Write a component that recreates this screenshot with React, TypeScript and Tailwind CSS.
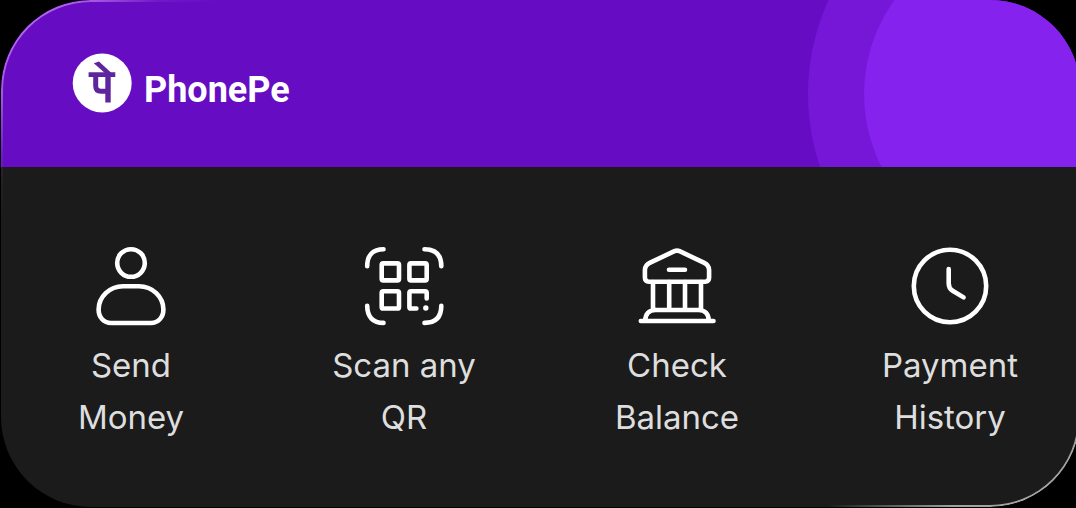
import type { ReactNode } from "react";

function Glyph({ children }: { children: ReactNode }) {
  return (
    <svg
      aria-hidden="true"
      className="size-20"
      viewBox="0 0 80 80"
      fill="none"
      stroke="white"
      strokeWidth="4.6"
      strokeLinecap="round"
      strokeLinejoin="round"
    >
      {children}
    </svg>
  );
}

const actions = [
  {
    lines: ["Send", "Money"],
    icon: (
      <Glyph>
        <circle cx="40" cy="17" r="13.8" />
        <path d="M32 40.3H48C61.5 40.3 72.4 51 72.4 63.5C72.4 71.5 67 77 60 77H20C13 77 7.6 71.5 7.6 63.5C7.6 51 18.5 40.3 32 40.3Z" />
      </Glyph>
    ),
  },
  {
    lines: ["Scan any", "QR"],
    icon: (
      <Glyph>
        <path d="M19.5 3.2C9 3.2 3.2 9 3.2 20.2M60.5 3.2C71.5 3.2 77.3 9 77.3 20.2M77.3 59.8C77.3 71 71.5 76.9 60.5 76.9M19.5 76.9C9 76.9 3.2 71 3.2 59.8" />
        <rect x="17.7" y="17.4" width="17.3" height="17" rx="1.6" />
        <rect x="45.4" y="17.4" width="17.3" height="17" rx="1.6" />
        <rect x="17.7" y="45.2" width="17.3" height="17.3" rx="1.6" />
        <path d="M52.4 62.5H47C46 62.5 45.4 61.9 45.4 60.9V46.8C45.4 45.8 46 45.2 47 45.2H61.1C62.1 45.2 62.7 45.8 62.7 46.8V52.4" />
        <circle cx="61.8" cy="62" r="2.7" fill="white" stroke="none" />
      </Glyph>
    ),
  },
  {
    lines: ["Check", "Balance"],
    icon: (
      <Glyph>
        <path d="M37.4 5.2C39.2 4.4 40.8 4.4 42.6 5.2L66.8 16.6C70 18.1 72.1 20.6 72.1 24V31.5C72.1 34.3 70.7 35.7 68 35.7H12C9.3 35.7 7.9 34.3 7.9 31.5V24C7.9 20.6 10 18.1 13.2 16.6Z" />
        <path d="M32 23.8H48M16 36V64M32.2 36V64M48 36V64M64 36V64M3.8 75H76.5M8.2 75C8.2 68 12 64 18.5 64H61.5C68 64 71.8 68 71.8 75" />
      </Glyph>
    ),
  },
  {
    lines: ["Payment", "History"],
    icon: (
      <Glyph>
        <circle cx="40" cy="40" r="36.2" />
        <path d="M38.7 23V37.5C38.7 41 39.8 43 42.6 44.7L53.6 51.4" />
      </Glyph>
    ),
  },
];

function Logo() {
  return (
    <div className="flex items-end gap-3">
      <svg aria-hidden="true" className="size-15" viewBox="0 0 60 60">
        <circle cx="30.2" cy="30" r="29.5" fill="white" />
        <g fill="none" stroke="#5f259f">
          <path d="M16.6 21.6H43.3" strokeWidth="4.6" />
          <path d="M36 21V49.5" strokeWidth="5.4" />
          <path d="M23.7 22V33C23.7 36.8 25.5 38.2 29 38.2H36" strokeWidth="5" />
        </g>
        <path d="M21.8 10.2L27 8.4L40 20.5H33.4Z" fill="#5f259f" />
      </svg>
      <span className="font-['Roboto',sans-serif] text-[36px] leading-[46px] font-bold text-white">
        PhonePe
      </span>
    </div>
  );
}

export default function App() {
  return (
    <div className="min-h-screen overflow-hidden bg-black font-['Inter',sans-serif]">
      <main className="relative -mr-1 ml-px overflow-hidden rounded-[90px] bg-[#1b1b1b]">
        <header className="relative overflow-hidden bg-[#660dc3] px-[71px] pt-[53px] pb-[54px]">
          <svg
            aria-hidden="true"
            className="absolute top-0 right-0 h-full w-[280px]"
            viewBox="0 0 280 167"
          >
            <circle cx="233" cy="94" r="225" fill="#7617d8" />
            <circle cx="224" cy="94" r="160" fill="#8522ee" />
          </svg>
          <Logo />
        </header>
        <nav className="flex justify-between px-[50px] pt-[79px] pb-16">
          {actions.map(({ lines, icon }) => (
            <button
              key={lines[0]}
              type="button"
              className="flex w-40 flex-col items-center gap-[13px] text-[33px] leading-[52px] text-[#dedede]"
            >
              {icon}
              <span className="flex flex-col items-center whitespace-nowrap">
                <span>{lines[0]} </span>
                <span>{lines[1]}</span>
              </span>
            </button>
          ))}
        </nav>
        <div className="pointer-events-none absolute inset-0 rounded-[90px] bg-[linear-gradient(135deg,rgba(225,160,255,0.75)_0%,rgba(225,160,255,0.5)_6%,rgba(225,160,255,0.08)_10%,transparent_14%,transparent_84%,rgba(255,255,255,0.6)_92%)] [mask:linear-gradient(#000_0_0)_content-box_exclude,linear-gradient(#000_0_0)] p-0.5" />
      </main>
    </div>
  );
}
